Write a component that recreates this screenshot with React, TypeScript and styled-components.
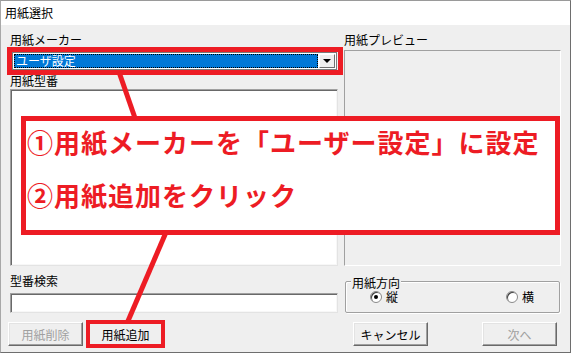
import React from "react";
import styled, { createGlobalStyle } from "styled-components";

const Global = createGlobalStyle`
  html, body { margin: 0; padding: 0; background: #ffffff; }
  body { font-family: "Noto Sans CJK JP", "Noto Sans", sans-serif; font-size: 12px; color: #000; }
  * { box-sizing: border-box; }
`;

const RED = "#ed1c24";

const Window = styled.div`
  position: relative;
  width: 571px;
  height: 353px;
  background: #efefef;
  border: 1px solid #6e6e6e;
  border-top-color: #9a9a9a;
  border-left-color: #a8a8a8;
  display: flex;
  flex-direction: column;
  overflow: hidden;
`;

const TitleBar = styled.div`
  height: 24px;
  background: #ffffff;
  display: flex;
  align-items: center;
  padding-left: 4px;
  font-size: 12px;
  line-height: 14px;
`;

const Body = styled.div`
  flex: 1;
  display: flex;
  flex-direction: column;
  padding-top: 8px;
`;

const Columns = styled.div`
  display: grid;
  grid-template-columns: 328px 217px;
  column-gap: 6px;
  margin-left: 9px;
`;

const Column = styled.div`
  display: flex;
  flex-direction: column;
`;

const Label = styled.div<{ $mt?: number }>`
  height: 14px;
  line-height: 14px;
  font-size: 12px;
  white-space: nowrap;
  margin-top: ${(p) => p.$mt ?? 0}px;
`;

const Combo = styled.div`
  margin-top: 5px;
  margin-left: 2px;
  width: 325px;
  height: 18px;
  background: #fff;
  border: 1px solid #7a7a7a;
  display: flex;
  padding: 1px;
`;

const ComboValue = styled.div`
  flex: 1;
  background: #0078d7;
  color: #fff;
  outline: 1px dotted #000;
  outline-offset: -1px;
  padding-left: 2px;
  line-height: 14px;
  font-size: 12px;
`;

const ComboButton = styled.div`
  width: 16px;
  margin-left: 1px;
  background: #efefef;
  border: 1px solid;
  border-color: #fff #707070 #707070 #fff;
  display: flex;
  align-items: center;
  justify-content: center;
`;

const Arrow = styled.div`
  width: 0;
  height: 0;
  border-left: 4px solid transparent;
  border-right: 4px solid transparent;
  border-top: 4px solid #000;
`;

const Sunken = styled.div<{ $h: number; $mt: number }>`
  height: ${(p) => p.$h}px;
  margin-top: ${(p) => p.$mt}px;
  background: #fff;
  border: 1px solid;
  border-color: #a0a0a0 #e3e3e3 #e3e3e3 #a0a0a0;
  box-shadow: inset 1px 1px 0 #696969, inset -1px -1px 0 #f7f7f7;
`;

const Preview = styled.div`
  height: 216px;
  margin-top: 3px;
  border: 1px solid;
  border-color: #a0a0a0 #ffffff #ffffff #a0a0a0;
  background: #efefef;
`;

const Group = styled.div`
  margin: 15px 0 0 1px;
  width: 215px;
  height: 32px;
  border: 1px solid #a0a0a0;
  border-radius: 2px;
  box-shadow: inset 1px 1px 0 #fff, 1px 1px 0 #fff;
  display: flex;
  flex-direction: column;
`;

const GroupTitle = styled.div`
  align-self: flex-start;
  margin: -6px 0 0 5px;
  padding: 0 1px;
  background: #efefef;
  height: 13px;
  line-height: 13px;
  font-size: 12px;
`;

const RadioRow = styled.div`
  display: flex;
  justify-content: space-between;
  padding: 0 25px 0 24px;
  margin-top: 1px;
`;

const RadioItem = styled.label`
  display: flex;
  align-items: center;
  gap: 4px;
  font-size: 12px;
  line-height: 14px;
`;

const RadioDot = styled.span<{ $on?: boolean }>`
  width: 12px;
  height: 12px;
  border-radius: 50%;
  background: #fff;
  border: 1px solid #8a8a8a;
  box-shadow: inset 1px 1px 0 #404040;
  display: flex;
  align-items: center;
  justify-content: center;
  &::after {
    content: "";
    width: 4px;
    height: 4px;
    border-radius: 50%;
    background: ${(p) => (p.$on ? "#000" : "transparent")};
  }
`;

const ButtonRow = styled.div`
  display: flex;
  margin-top: 9px;
  padding-left: 7px;
`;

const Button = styled.div<{ $disabled?: boolean; $ml?: number }>`
  width: 75px;
  height: 24px;
  margin-left: ${(p) => p.$ml ?? 0}px;
  background: #efefef;
  border: 1px solid;
  border-color: #ffffff #696969 #696969 #ffffff;
  box-shadow: inset -1px -1px 0 #a0a0a0, inset 1px 1px 0 #e3e3e3;
  display: flex;
  align-items: center;
  justify-content: center;
  font-size: 12px;
  color: ${(p) => (p.$disabled ? "#a0a0a0" : "#000")};
`;

const RedFrame = styled.div<{ $x: number; $y: number; $w: number; $h: number; $b: number; $fill?: boolean }>`
  position: absolute;
  left: ${(p) => p.$x}px;
  top: ${(p) => p.$y}px;
  width: ${(p) => p.$w}px;
  height: ${(p) => p.$h}px;
  border: ${(p) => p.$b}px solid ${RED};
  background: ${(p) => (p.$fill ? "#fff" : "transparent")};
  pointer-events: none;
`;

const Callout = styled(RedFrame)`
  display: flex;
  flex-direction: column;
  padding: 6px 0 0 1px;
  gap: 23px;
`;

const CalloutLine = styled.div`
  color: ${RED};
  font-family: "Noto Sans CJK JP", sans-serif;
  font-weight: 700;
  font-size: 26px;
  letter-spacing: 1px;
  line-height: 30px;
  white-space: nowrap;
`;

const Lines = styled.svg`
  position: absolute;
  left: -1px;
  top: -1px;
  pointer-events: none;
`;

export default function App() {
  return (
    <>
      <Global />
      <Window>
        <TitleBar>用紙選択</TitleBar>
        <Body>
          <Columns>
            <Column>
              <Label>用紙メーカー</Label>
              <Combo>
                <ComboValue>ユーザ設定</ComboValue>
                <ComboButton>
                  <Arrow />
                </ComboButton>
              </Combo>
              <Label $mt={4}>用紙型番</Label>
              <Sunken $h={177} $mt={1} />
              <Label $mt={8}>型番検索</Label>
              <Sunken $h={20} $mt={5} />
            </Column>
            <Column>
              <Label>用紙プレビュー</Label>
              <Preview />
              <Group>
                <GroupTitle>用紙方向</GroupTitle>
                <RadioRow>
                  <RadioItem>
                    <RadioDot $on />縦
                  </RadioItem>
                  <RadioItem>
                    <RadioDot />横
                  </RadioItem>
                </RadioRow>
              </Group>
            </Column>
          </Columns>
          <ButtonRow>
            <Button $disabled>用紙削除</Button>
            <Button $ml={5}>用紙追加</Button>
            <Button $ml={190}>キャンセル</Button>
            <Button $ml={54} $disabled>次へ</Button>
          </ButtonRow>
        </Body>

        <RedFrame $x={6} $y={46} $w={336} $h={28} $b={5} />
        <RedFrame $x={85} $y={319} $w={79} $h={28} $b={4} />
        <Lines width={571} height={353} viewBox="0 0 571 353">
          <line x1={119} y1={72} x2={135} y2={118} stroke={RED} strokeWidth={5} />
          <line x1={167} y1={230} x2={128} y2={321} stroke={RED} strokeWidth={5} />
        </Lines>
        <Callout $x={20} $y={115} $w={539} $h={119} $b={5} $fill>
          <CalloutLine>①用紙メーカーを「ユーザー設定」に設定</CalloutLine>
          <CalloutLine>②用紙追加をクリック</CalloutLine>
        </Callout>
      </Window>
    </>
  );
}
